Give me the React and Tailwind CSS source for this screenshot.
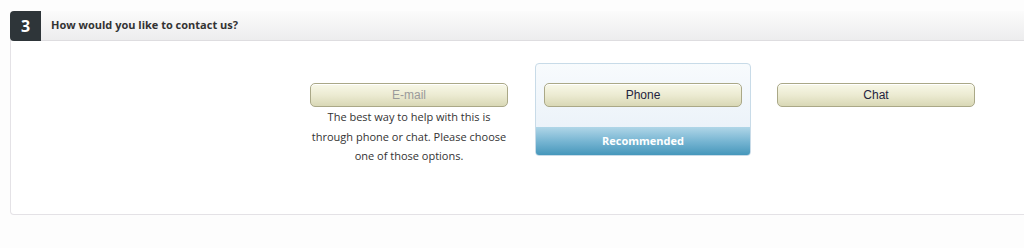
import React from 'react';

const font = { fontFamily: '"Open Sans", "Liberation Sans", sans-serif' };

const OptionButton = ({ label, disabled }) => (
    <button
        className={`block h-[24px] w-[198px] rounded-[5px] border border-[#aaa887] bg-gradient-to-b from-[#f8f8e8] via-[#ecebd2] to-[#d9d8b6] shadow-[inset_0_1px_0_#ffffff] font-['Liberation_Sans',Arial,sans-serif] text-[12px] leading-[22px] ${disabled ? 'text-[#9a9a9a]' : 'text-[#1f2340]'}`}
    >
        {label}
    </button>
);

const App = () => {
    return (
        <div className="h-[248px] w-[1024px] overflow-hidden bg-[#fdfdfd] pt-[11px] pl-[10px]" style={font}>
            <div className="h-[204px] w-[1040px] rounded-[4px] border border-t-0 border-[#e4e2e6] bg-white">
                <div className="-ml-px flex h-[30px] items-center rounded-tr-[4px] border-b border-[#dedde0] bg-gradient-to-b from-[#fbfbfb] to-[#ededee]">
                    <div className="flex h-[30px] w-[31px] items-center justify-center rounded-l-[4px] bg-[#2e3539] text-[16px] font-bold text-white">
                        3
                    </div>
                    <h2 className="ml-[10px] text-[11px] font-bold text-[#333]">How would you like to contact us?</h2>
                </div>

                <div className="flex items-start pl-[299px] pt-[22px]">
                    <div className="mt-[20px] flex w-[198px] flex-col items-center">
                        <OptionButton label="E-mail" disabled />
                        <p className="text-center text-[11px] leading-[19.5px] text-[#333]">
                            The best way to help with this is through phone or chat. Please choose one of those options.
                        </p>
                    </div>

                    <div className="ml-[27px] flex h-[93px] w-[216px] flex-col overflow-hidden rounded-[4px] border border-[#c8dbe8] bg-gradient-to-b from-[#f8fbfd] to-[#e6eff8]">
                        <div className="flex h-[63px] justify-center pt-[19px]">
                            <OptionButton label="Phone" />
                        </div>
                        <div className="flex flex-1 items-center justify-center bg-gradient-to-b from-[#b0d6e8] via-[#78b6d3] to-[#4597bb] text-[11px] font-bold text-white">
                            Recommended
                        </div>
                    </div>

                    <div className="ml-[26px] mt-[20px] flex">
                        <OptionButton label="Chat" />
                    </div>
                </div>
            </div>
        </div>
    );
};

export default App;
